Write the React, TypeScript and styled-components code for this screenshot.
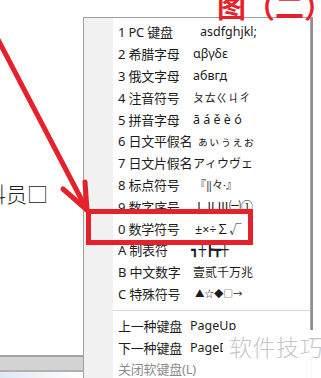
import * as React from "react"
import styled, {createGlobalStyle} from "styled-components";

const GlobalStyle = createGlobalStyle`
  html, body {
    margin: 0;
    padding: 0;
    background: #ffffff;
  }
`

const RED = '#e5222b';

type Item = {
    key: string,
    label: string,
    value?: string,
    shift?: number,
    size?: number,
    mono?: boolean,
    clip?: number,
    muted?: boolean
}

const keyboards: Item[] = [
    {key: '1', label: 'PC 键盘', value: 'asdfghjkl;', shift: 7},
    {key: '2', label: '希腊字母', value: 'αβγδε'},
    {key: '3', label: '俄文字母', value: 'абвгд'},
    {key: '4', label: '注音符号', value: 'ㄆㄊㄍㄐㄔ', size: 11.5},
    {key: '5', label: '拼音字母', value: 'ā á ě è ó'},
    {key: '6', label: '日文平假名', value: 'ぁぃぅぇぉ', shift: 4, size: 11.5},
    {key: '7', label: '日文片假名', value: 'アィウヴェ', size: 12},
    {key: '8', label: '标点符号', value: '『‖々·』', shift: 2, size: 11},
    {key: '9', label: '数字序号', value: 'ⅠⅡⅢ㈠①', size: 12},
    {key: '0', label: '数学符号', value: '±×÷∑√', shift: 2},
    {key: 'A', label: '制表符', value: '┓┼┣┳┼', shift: -2, mono: true},
    {key: 'B', label: '中文数字', value: '壹贰千万兆', size: 12},
    {key: 'C', label: '特殊符号', value: '▲☆◆□→', shift: 2, size: 9.5},
]

const paging: Item[] = [
    {key: '', label: '上一种键盘', value: 'PageUp', shift: -3},
    {key: '', label: '下一种键盘', value: 'PageDown', shift: -3, clip: 33},
    {key: '', label: '关闭软键盘(L)', muted: true},
]

const MenuRow = ({item}: { item: Item }) => (
    <Row $muted={item.muted}>
        <Label>{item.key ? item.key + ' ' : ''}{item.label}</Label>
        {item.value && (
            <Value $shift={item.shift || 0} $size={item.size || 12.5} $mono={item.mono} $clip={item.clip}>
                {item.value}
            </Value>
        )}
    </Row>
)

const App = () => {
    return (
        <>
            <GlobalStyle/>
            <Stage>
                <LeftPane>
                    <DocText>料员□</DocText>
                    <StatusBar>
                        <StatusBand/>
                        <TaskStrip/>
                    </StatusBar>
                </LeftPane>

                <MenuColumn>
                    <Menu>
                        <Gutter/>
                        <List>
                            {keyboards.map(item => <MenuRow key={item.key} item={item}/>)}
                            <Separator/>
                            {paging.map(item => <MenuRow key={item.label} item={item}/>)}
                        </List>
                    </Menu>
                </MenuColumn>

                <Title>图（二）</Title>
                <Highlight/>
                <Arrow width="100" height="230" viewBox="0 0 100 230">
                    <g stroke={RED} strokeWidth="5" strokeLinecap="round" fill="none">
                        <line x1="-8" y1="28" x2="87" y2="210"/>
                        <line x1="63" y1="189" x2="87" y2="210"/>
                        <line x1="85" y1="182" x2="87" y2="210"/>
                    </g>
                </Arrow>
                <Watermark>软件技巧</Watermark>
            </Stage>
        </>
    )
}

const Stage = styled.div`
  position: relative;
  width: 321px;
  height: 378px;
  overflow: hidden;
  display: flex;
  background: #ffffff;
  font-family: "Noto Sans", "Noto Sans CJK SC", sans-serif;
`

const LeftPane = styled.div`
  width: 83px;
  flex-shrink: 0;
  display: flex;
  flex-direction: column;
  background: #ffffff;
`

const DocText = styled.div`
  margin-top: 180px;
  margin-left: -15px;
  font: 300 21px/26px "Noto Sans CJK SC", serif;
  color: #202020;
  white-space: nowrap;
`

const StatusBar = styled.div`
  margin-top: auto;
  height: 23px;
  display: flex;
  flex-direction: column;
`

const StatusBand = styled.div`
  height: 13px;
  background: #d3d3d3;
  border-top: 2px solid #a4a4a4;
  border-bottom: 2px solid #b0b0b0;
`

const TaskStrip = styled.div`
  flex: 1;
  background: linear-gradient(90deg, #dfe8f3, #f4f6f8 60%, #ffffff);
`

const MenuColumn = styled.div`
  padding-top: 17px;
  width: 231px;
  flex-shrink: 0;
`

const Menu = styled.div`
  display: flex;
  height: 400px;
  width: 226px;
  background: #ffffff;
  border-left: 1px solid #a0a0a0;
  border-top: 1px solid #a0a0a0;
  border-right: 1px solid #a7a7a7;
  box-shadow: 2px 0 0 #8f8f8f;
`

const Gutter = styled.div`
  width: 29px;
  flex-shrink: 0;
  background: #f1f1f1;
`

const List = styled.div`
  flex: 1;
  padding-top: 3px;
`

const Row = styled.div<{ $muted?: boolean }>`
  display: grid;
  grid-template-columns: 75px auto;
  align-items: center;
  height: 21.8px;
  padding-left: 5px;
  font-size: 13px;
  color: ${p => p.$muted ? '#8c8c8c' : '#1c1c1c'};
  white-space: nowrap;
`

const Label = styled.span`
  letter-spacing: -0.2px;
`

const Value = styled.span<{ $shift: number, $size: number, $mono?: boolean, $clip?: number }>`
  margin-left: ${p => p.$shift}px;
  font-size: ${p => p.$size}px;
  font-family: ${p => p.$mono ? '"DejaVu Sans Mono", monospace' : 'inherit'};
  font-weight: ${p => p.$mono ? 700 : 400};
  ${p => p.$clip ? `max-width: ${p.$clip}px; overflow: hidden;` : ''}
`

const Separator = styled.div`
  height: 1px;
  margin: 6px 0 3px;
  background: #d9d9d9;
`

const Title = styled.div`
  position: absolute;
  left: 217px;
  top: -9px;
  font: 700 29px/29px "Noto Sans CJK SC", sans-serif;
  color: ${RED};
  white-space: nowrap;
`

const Highlight = styled.div`
  position: absolute;
  left: 86px;
  top: 209px;
  width: 167px;
  height: 36px;
  box-sizing: border-box;
  border: 5px solid ${RED};
`

const Arrow = styled.svg`
  position: absolute;
  left: 0;
  top: 0;
  overflow: visible;
`

const Watermark = styled.div`
  position: absolute;
  left: 226px;
  top: 330px;
  right: 0;
  bottom: 0;
  background: rgba(255, 255, 255, 0.96);
  padding: 2px 0 0 3px;
  font: 300 23px/28px "Noto Sans CJK SC", sans-serif;
  color: #c6c6c6;
  letter-spacing: 0.5px;
  white-space: nowrap;
`

export default App;
